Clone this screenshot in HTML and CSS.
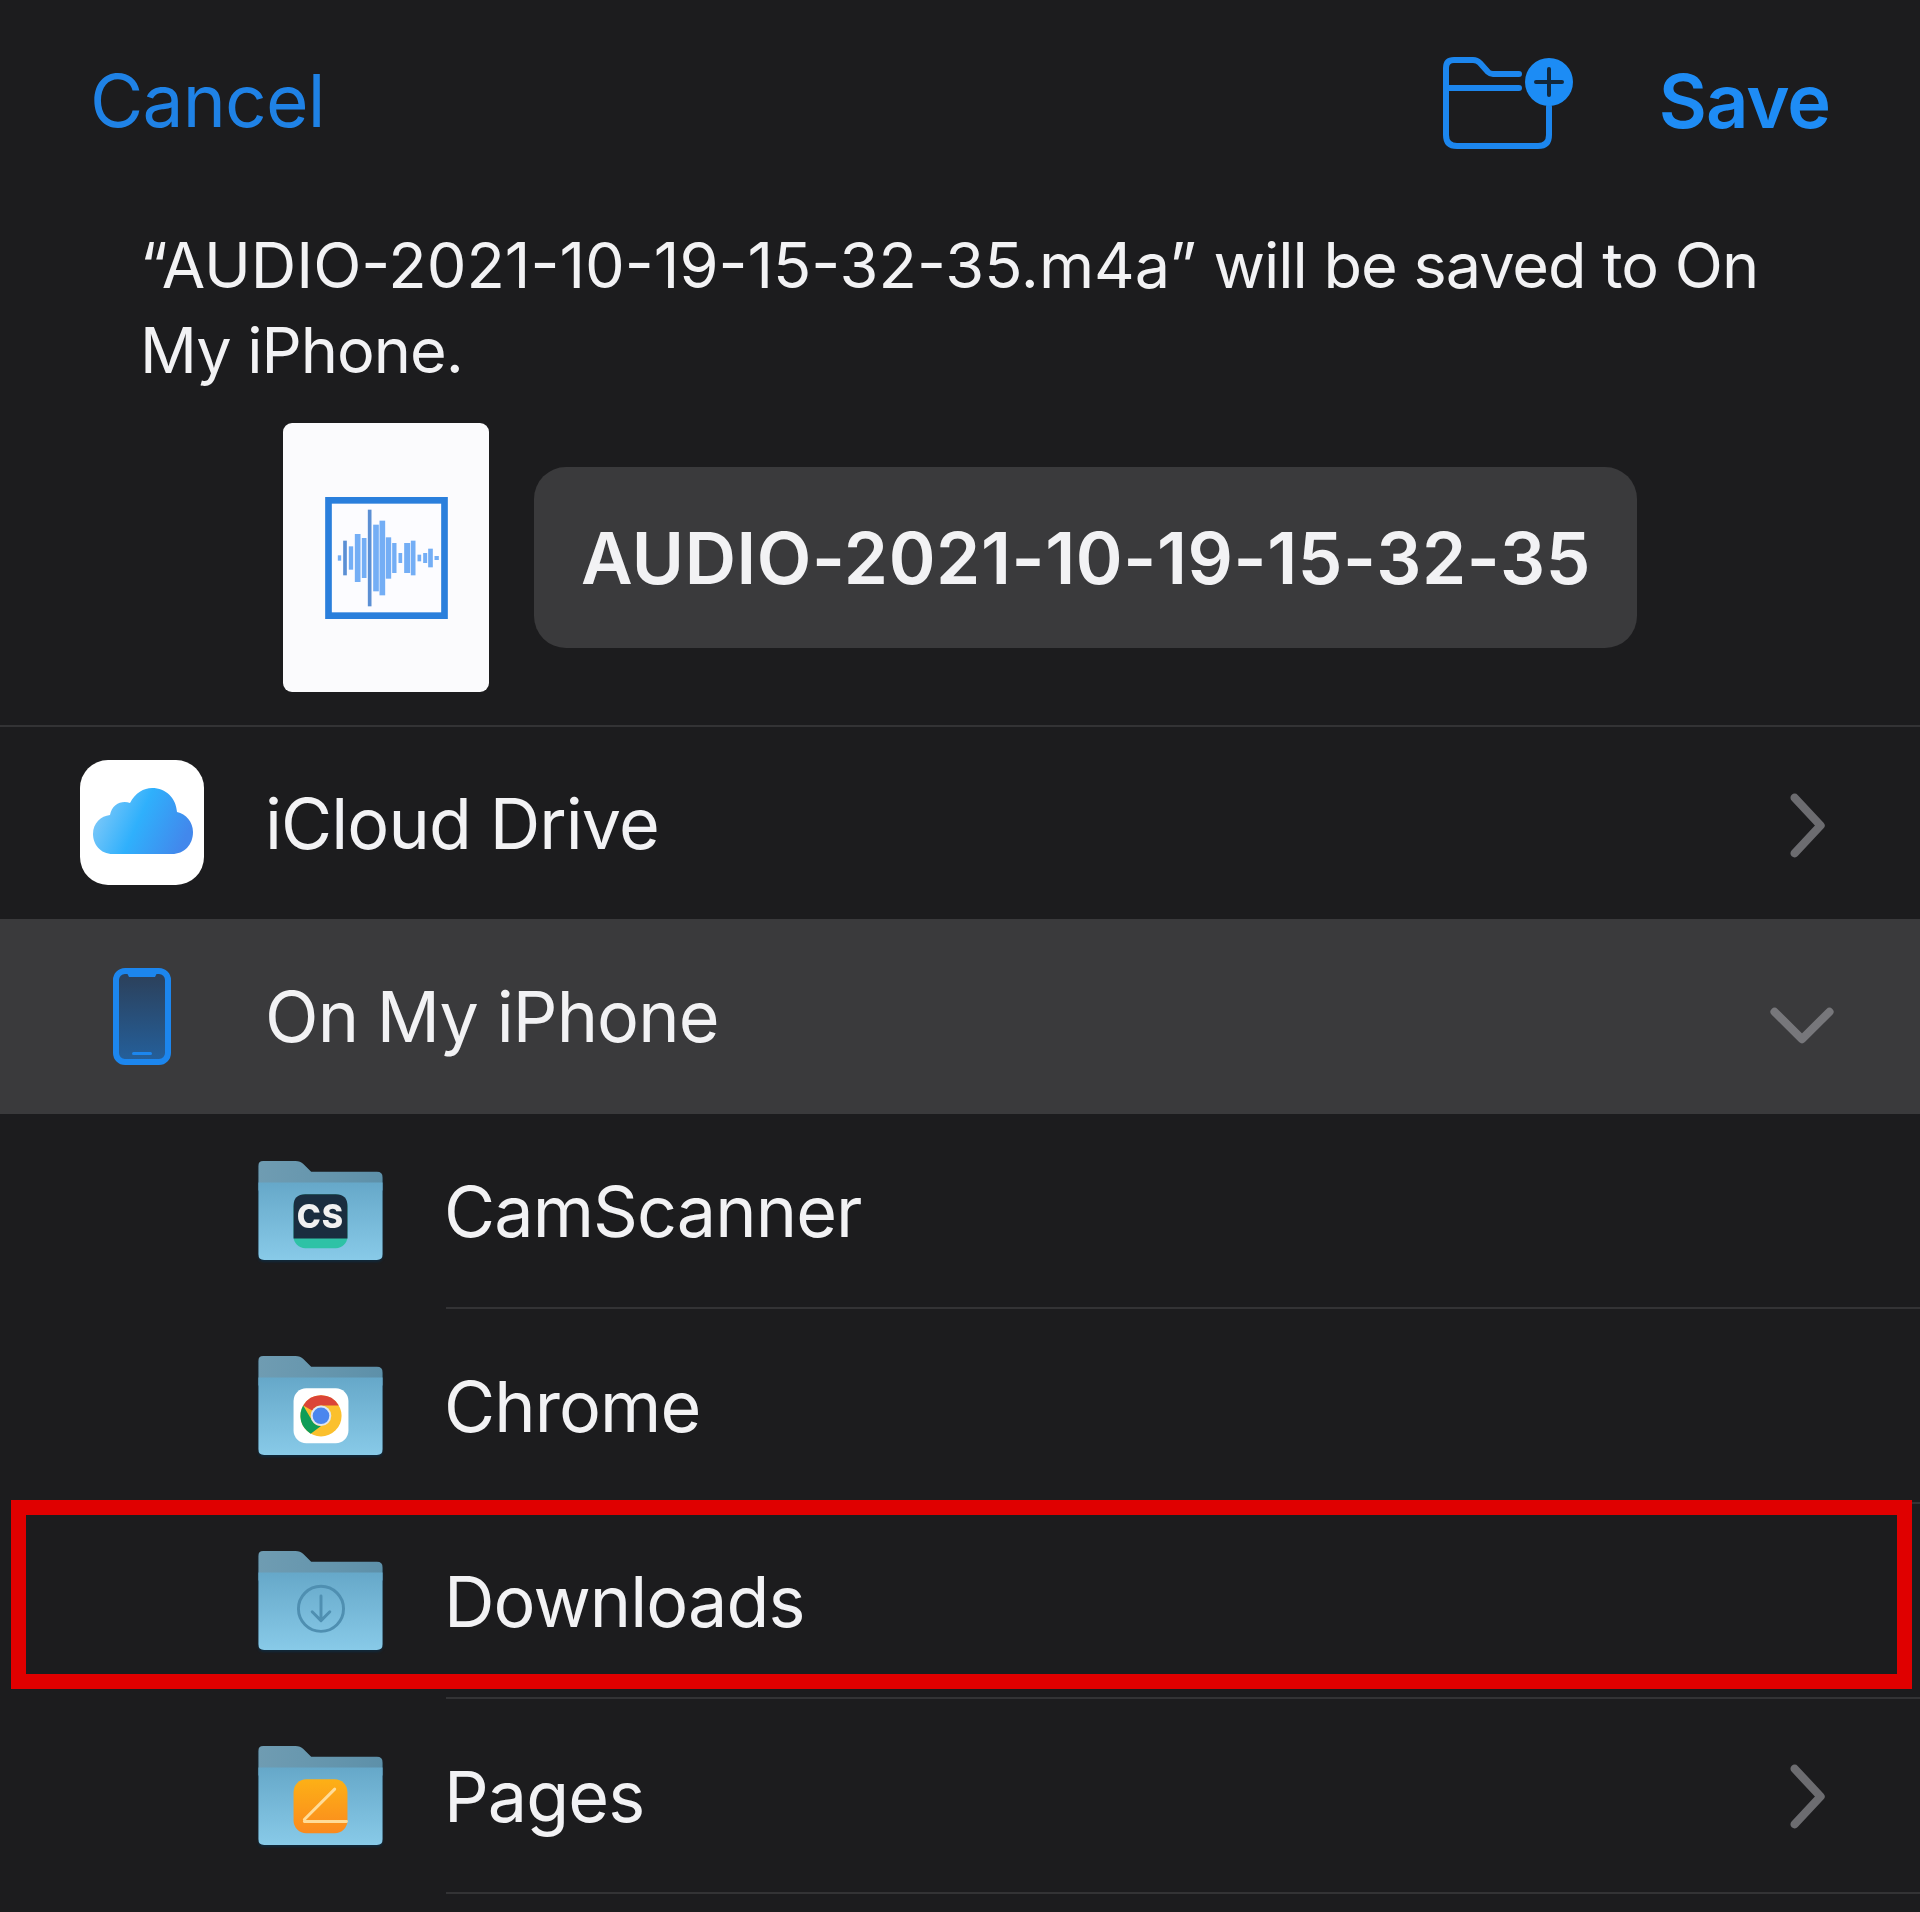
FILE: index.html
```html
<!DOCTYPE html>
<html lang="en">
<head>
<meta charset="utf-8">
<title>Save</title>
<link rel="stylesheet" href="styles.css">
</head>
<body>
<svg class="defs" aria-hidden="true">
  <defs>
    <linearGradient id="front" x1="0" y1="0" x2="0" y2="1"><stop offset="0" stop-color="#66a8c9"/><stop offset="1" stop-color="#88cae8"/></linearGradient>
    <linearGradient id="back" x1="0" y1="0" x2="1" y2="0"><stop offset="0" stop-color="#6f9cb2"/><stop offset="1" stop-color="#5d90a9"/></linearGradient>
    <linearGradient id="cloud" x1="0" y1="0.2" x2="1" y2="0.5"><stop offset="0" stop-color="#8accf8"/><stop offset="0.5" stop-color="#2fb0fc"/><stop offset="1" stop-color="#4288ec"/></linearGradient>
    <linearGradient id="orange" x1="0" y1="0" x2="0" y2="1"><stop offset="0" stop-color="#fdb016"/><stop offset="1" stop-color="#fb8a1e"/></linearGradient>
    <linearGradient id="screen" x1="0" y1="0" x2="0" y2="1"><stop offset="0" stop-color="#2c3f58"/><stop offset="1" stop-color="#24609c"/></linearGradient>
    <symbol id="folder" viewBox="0 0 127 101">
      <path fill="url(#back)" d="M5 0H38q5 0 8 3l8 8H121q6 0 6 6V30H0V5q0-5 5-5z"/>
      <path fill="url(#front)" d="M0 22H127V95q0 6-6 6H6q-6 0-6-6z"/>
    </symbol>
  </defs>
</svg>

<header class="header">
  <span class="cancel">Cancel</span>
  <svg class="new-folder" viewBox="0 0 134 92" fill="none">
    <path stroke="#1c86ee" stroke-width="6" stroke-linecap="round" d="M3 31V11q0-8 8-8H30q4 0 7 3l8 9q2 2 5 2H76M3 31H76M3 31V78q0 11 11 11H95q11 0 11-11V50"/>
    <circle cx="106" cy="25" r="24" fill="#1c8cf5"/>
    <path stroke="#12283c" stroke-width="4" stroke-linecap="round" d="M106 12V38M93 25H119"/>
  </svg>
  <span class="save">Save</span>
</header>

<p class="message"><span class="filename">“AUDIO-2021-10-19-15-32-35.m4a”</span> will be saved to On My iPhone.</p>

<section class="composer">
  <div class="thumb">
    <svg class="wave" viewBox="162 262 368 366">
      <rect x="172" y="272" width="348" height="346" fill="#fcfcff" stroke="#2a7fdc" stroke-width="20"/>
      <g class="bars" fill="#74aef5">
        <rect x="200" y="437" width="10" height="16"/>
        <rect x="216" y="393" width="11" height="104" fill="#5b8fd4"/>
        <rect x="233" y="410" width="13" height="70"/>
        <rect x="251" y="373" width="17" height="144"/>
        <rect x="272" y="385" width="14" height="120"/>
        <rect x="290" y="300" width="11" height="290" fill="#5b8fd4"/>
        <rect x="306" y="345" width="17" height="200"/>
        <rect x="325" y="333" width="17" height="224"/>
        <rect x="344" y="383" width="16" height="124"/>
        <rect x="363" y="400" width="13" height="90"/>
        <rect x="382" y="430" width="11" height="30"/>
        <rect x="399" y="400" width="18" height="90"/>
        <rect x="419" y="393" width="14" height="104"/>
        <rect x="439" y="435" width="11" height="20"/>
        <rect x="456" y="430" width="12" height="30"/>
        <rect x="471" y="417" width="14" height="56"/>
        <rect x="490" y="439" width="13" height="12"/>
      </g>
    </svg>
  </div>
  <div class="name-field">AUDIO-2021-10-19-15-32-35</div>
</section>

<ul class="locations">
  <li class="location">
    <svg class="icloud" viewBox="0 0 124 125">
      <rect width="124" height="125" rx="28" fill="#fff"/>
      <path fill="url(#cloud)" d="M33 94C20 94 13 84 13 74C13 63 21 56 30 55C32 44 42 40 50 43C55 33 64 28 72 28C86 28 96 38 97 52C106 54 113 62 113 72C113 85 104 94 92 94Z"/>
    </svg>
    <span class="label">iCloud Drive</span>
    <svg class="chevron chevron-low" viewBox="0 0 40 70" fill="none"><path d="M5 5L33 35L5 65" stroke="#6c6c70" stroke-width="9" stroke-linecap="round" stroke-linejoin="round"/></svg>
  </li>
  <li class="location selected">
    <span class="phone-slot">
      <svg class="phone" viewBox="0 0 58 97">
        <rect x="3" y="3" width="52" height="91" rx="9" fill="url(#screen)" stroke="#1c86ee" stroke-width="6"/>
        <path fill="#1c86ee" d="M13 3H45L42 9H16z"/>
        <rect x="19" y="84" width="20" height="3" rx="1.5" fill="#1c86ee"/>
      </svg>
    </span>
    <span class="label">On My iPhone</span>
    <svg class="chevron-down" viewBox="0 0 70 40" fill="none"><path d="M5 5L35 35L65 5" stroke="#77777b" stroke-width="9" stroke-linecap="round" stroke-linejoin="round"/></svg>
  </li>
  <li class="folder-row">
    <svg class="folder" viewBox="0 0 127 101">
      <use href="#folder" width="127" height="101"/>
      <rect x="36" y="34" width="55" height="55" rx="12" fill="#2ec2a6"/>
      <path fill="#1a2d3f" d="M48 34H79q12 0 12 12V79H36V46q0-12 12-12z"/>
      <text class="cs-mark" x="63.5" y="68" text-anchor="middle">CS</text>
    </svg>
    <span class="label">CamScanner</span>
  </li>
  <li class="folder-row">
    <svg class="folder" viewBox="0 0 127 101">
      <use href="#folder" width="127" height="101"/>
      <rect x="36" y="33" width="56" height="56" rx="13" fill="#fff"/>
      <circle cx="64" cy="61" r="21" fill="#fbc02d"/>
      <path fill="#db4437" d="M45.8 50.5A21 21 0 0 1 82.2 50.5H64a10.5 10.5 0 0 0-9 5.2z"/>
      <path fill="#0f9d58" d="M45.8 50.5L55 66a10.5 10.5 0 0 0 9 5.5L53.5 79.2A21 21 0 0 1 45.8 50.5z"/>
      <circle cx="64" cy="61" r="10.5" fill="#dfe6f0"/>
      <circle cx="64" cy="61" r="8.5" fill="#4a86ee"/>
    </svg>
    <span class="label">Chrome</span>
  </li>
  <li class="folder-row marked">
    <svg class="folder" viewBox="0 0 127 101">
      <use href="#folder" width="127" height="101"/>
      <g fill="none" stroke="#4f8fb1" stroke-width="3">
        <circle cx="64" cy="59" r="23"/>
        <path stroke-linecap="round" stroke-linejoin="round" d="M64 46V70M55 62L64 71L73 62"/>
      </g>
    </svg>
    <span class="label">Downloads</span>
    <span class="highlight-box"></span>
  </li>
  <li class="folder-row">
    <svg class="folder" viewBox="0 0 127 101">
      <use href="#folder" width="127" height="101"/>
      <rect x="36" y="34" width="55" height="55" rx="13" fill="url(#orange)"/>
      <path stroke="#ffdc98" stroke-width="3" stroke-linecap="round" fill="none" d="M47 75L78 44M47 77H90"/>
    </svg>
    <span class="label">Pages</span>
    <svg class="chevron" viewBox="0 0 40 70" fill="none"><path d="M5 5L33 35L5 65" stroke="#6c6c70" stroke-width="9" stroke-linecap="round" stroke-linejoin="round"/></svg>
  </li>
</ul>
</body>
</html>
```

FILE: styles.css
```css
* { box-sizing: border-box; }
html, body { margin: 0; padding: 0; }
body {
  width: 1920px;
  height: 1912px;
  overflow: hidden;
  background: #1c1c1e;
  color: #f2f2f4;
  font-family: Inter, "Liberation Sans", sans-serif;
  font-size: 70px;
  position: relative;
}
.defs { position: absolute; width: 0; height: 0; }

.header {
  height: 223px;
  padding: 57px 90px 0 90px;
  display: flex;
  align-items: flex-start;
}
.cancel { color: #1f82e6; font-size: 73px; line-height: 88px; letter-spacing: -0.8px; }
.save { color: #1e8cf5; font-size: 74px; line-height: 88px; font-weight: 600; letter-spacing: -1px; }
.new-folder { width: 134px; height: 92px; margin-left: auto; margin-right: 82px; }

.message {
  margin: 0;
  padding: 0 130px 0 140px;
  font-size: 63px;
  line-height: 85px;
  height: 200px;
  letter-spacing: -1px;
}
.filename { letter-spacing: 0; }

.composer {
  display: flex;
  align-items: center;
  gap: 45px;
  padding-left: 283px;
  height: 269px;
}
.thumb {
  width: 206px;
  height: 269px;
  background: #fbfbfd;
  border-radius: 9px;
  display: flex;
  align-items: center;
  justify-content: center;
}
.wave { width: 123px; height: 122px; }
.name-field {
  width: 1103px;
  height: 181px;
  background: #3a3a3c;
  border-radius: 32px;
  padding-left: 47px;
  display: flex;
  align-items: center;
  font-size: 71px;
  font-weight: 600;
  letter-spacing: 0.6px;
}

.locations {
  list-style: none;
  margin: 33px 0 0;
  padding: 0;
}
.location, .folder-row {
  display: flex;
  align-items: center;
  position: relative;
}
.location {
  height: 194px;
  padding-left: 80px;
  gap: 61px;
  border-top: 2px solid #333335;
}
.location.selected {
  height: 195px;
  background: #3a3a3c;
  border-top: 0;
}
.folder-row {
  height: 195px;
  padding-left: 258px;
  gap: 61px;
}
.folder-row::after {
  content: "";
  position: absolute;
  left: 446px;
  right: 0;
  bottom: 0;
  height: 2px;
  background: #333335;
}
.label { font-size: 70px; letter-spacing: -0.9px; }
.icloud { width: 124px; height: 125px; flex: none; margin-top: -2px; }
.phone-slot { width: 124px; display: flex; justify-content: center; flex: none; }
.phone { width: 58px; height: 97px; }
.folder { width: 125px; height: 99px; flex: none; margin-top: -2px; filter: drop-shadow(0 2px 1px #10283a); }
.chevron { width: 37px; height: 65px; position: absolute; right: 93px; }
.chevron-low { margin-top: 4px; }
.chevron-down { width: 64px; height: 37px; position: absolute; right: 86px; top: 88px; }
.cs-mark { font-family: Inter, sans-serif; font-size: 33px; font-weight: 800; fill: #f1f1f1; letter-spacing: 1px; }
.highlight-box {
  position: absolute;
  left: 11px;
  top: -4px;
  width: 1901px;
  height: 189px;
  border: 15px solid #e00000;
  z-index: 1;
}
```
